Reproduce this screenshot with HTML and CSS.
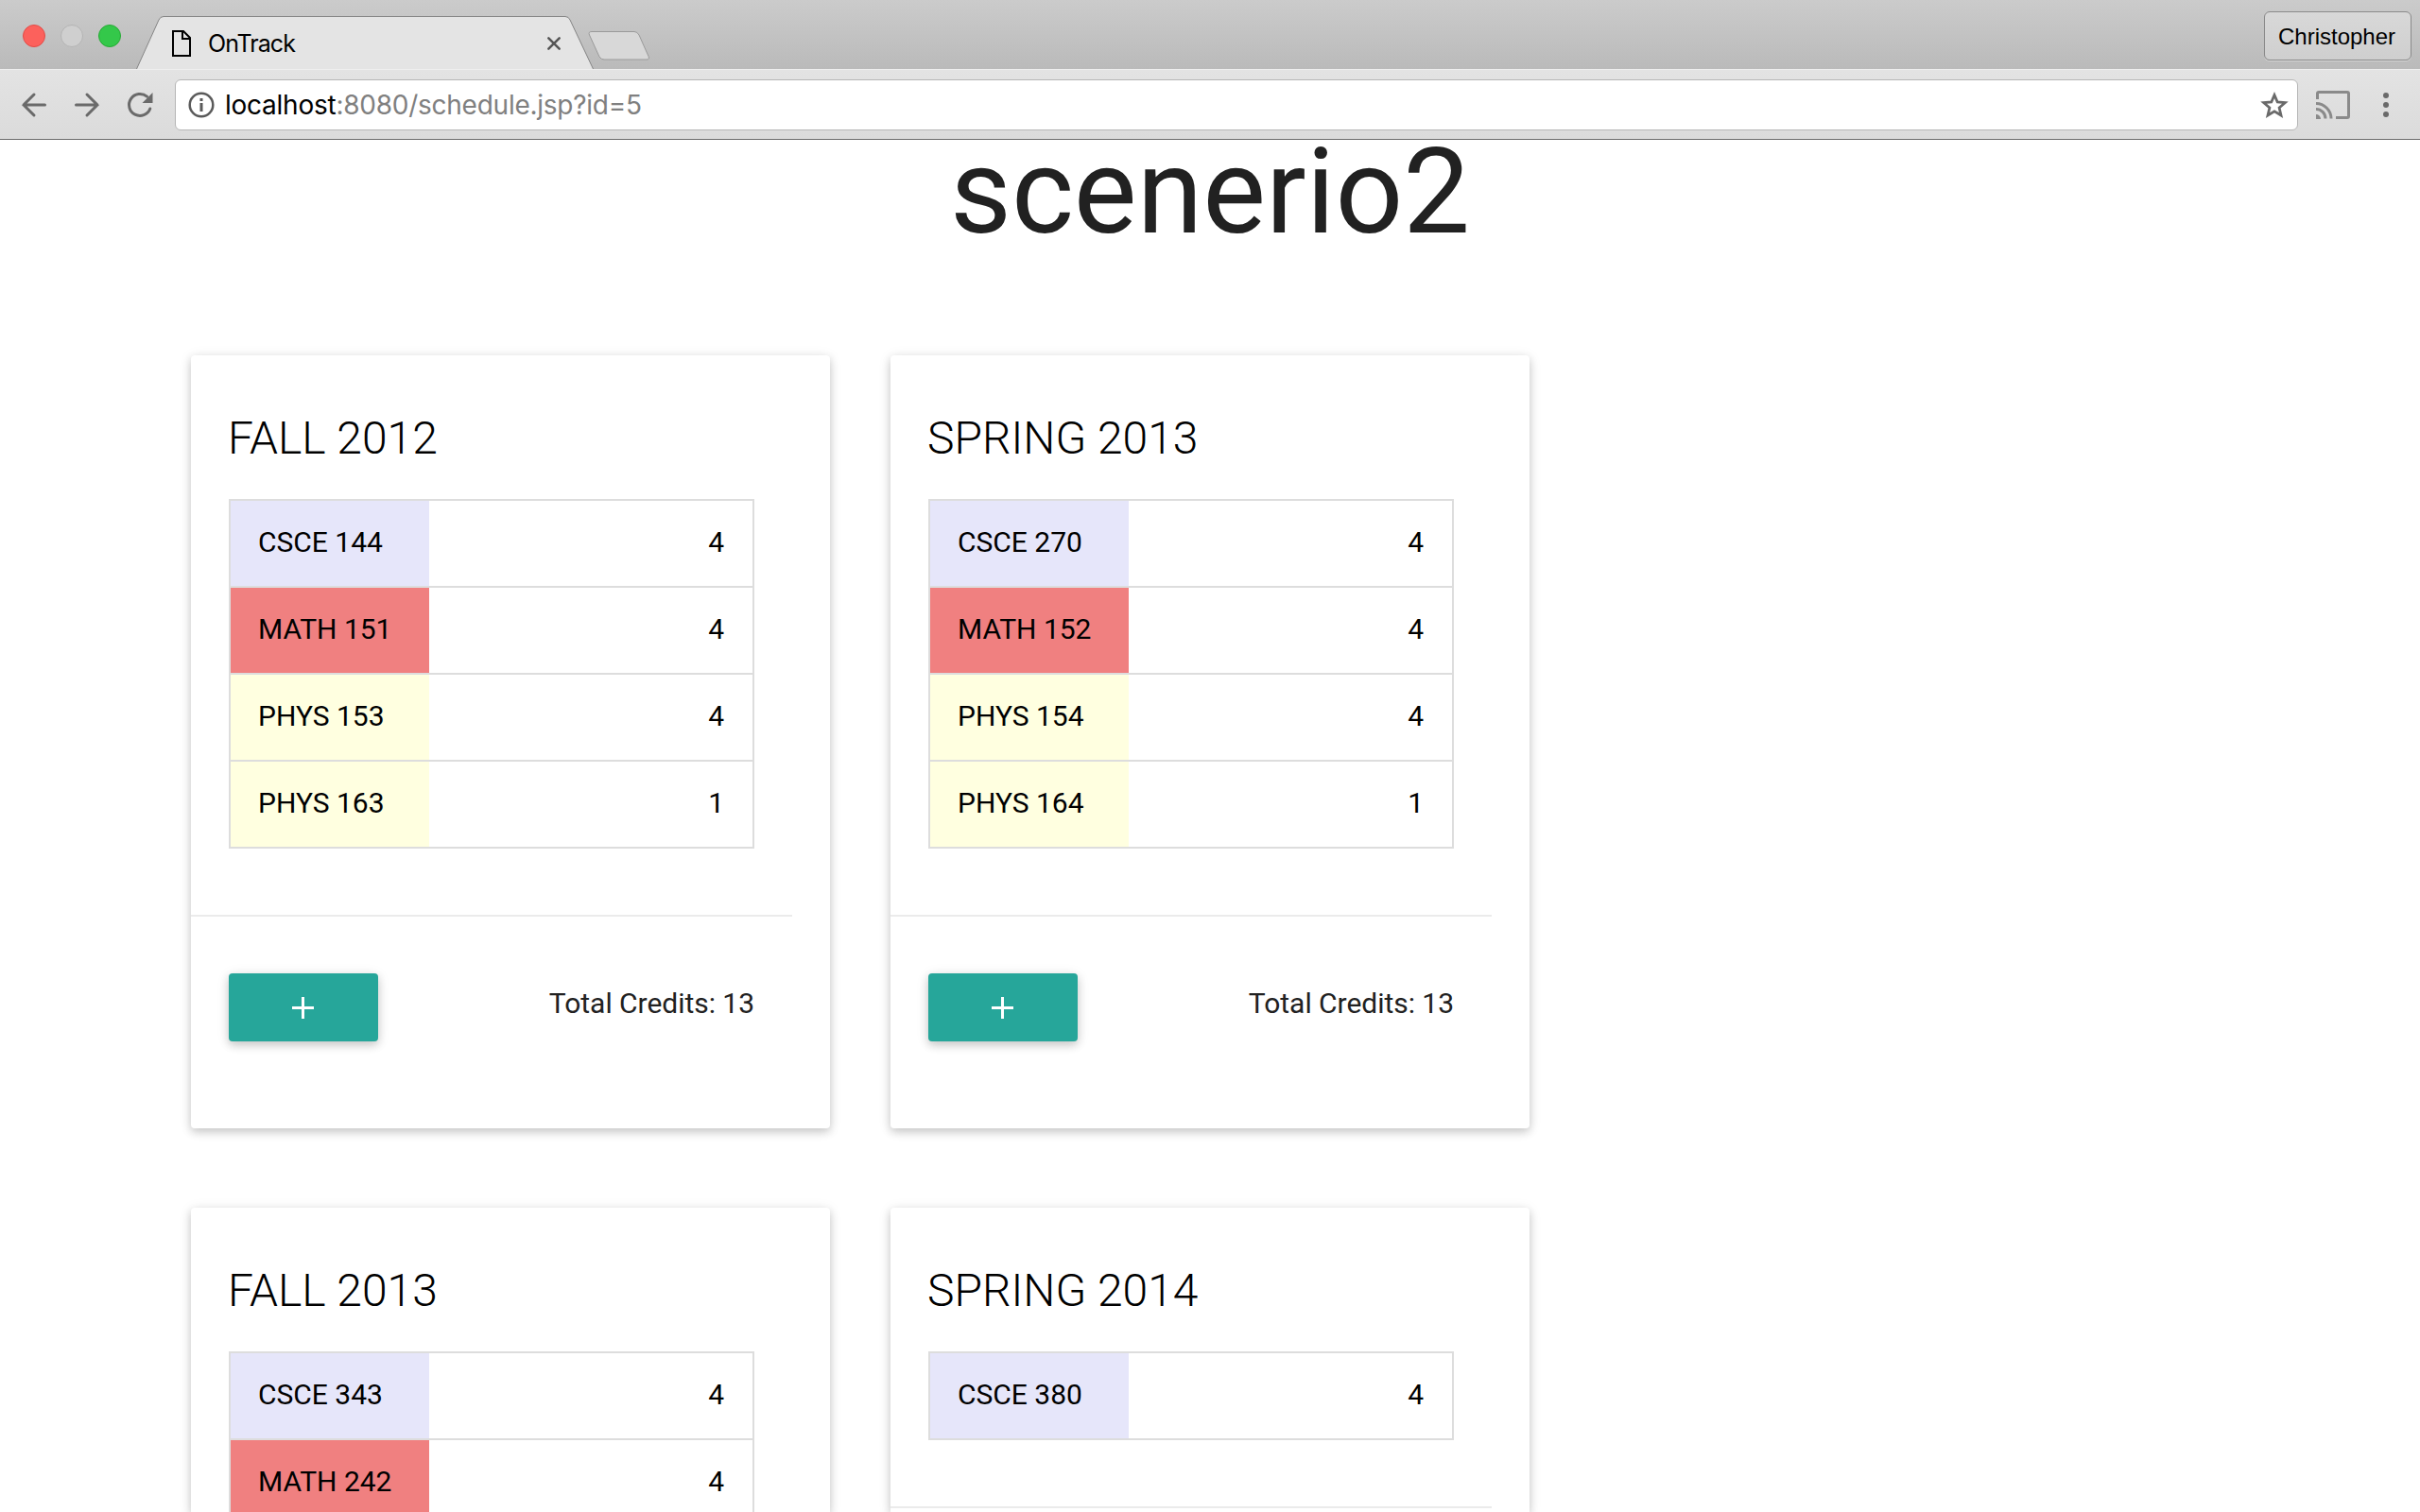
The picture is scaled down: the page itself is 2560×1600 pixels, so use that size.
FILE: index.html
```html
<!DOCTYPE html>
<html lang="en">
<head>
<meta charset="utf-8">
<title>OnTrack</title>
<link rel="stylesheet" href="styles.css">
</head>
<body>
<header class="browser">
  <div class="tabstrip">
    <div class="lights"><span class="light red"></span><span class="light idle"></span><span class="light green"></span></div>
    <div class="tab">
      <svg class="tab-shape" width="484" height="56" viewBox="0 0 484 56"><path d="M0.500 56L24 4Q25.500 0.500 29 0.500H454Q457.500 0.500 459 4L483.500 56" fill="#e4e4e4" stroke="#858585"/></svg>
      <div class="tab-content">
        <svg width="20" height="28" viewBox="0 0 20 28" fill="none" stroke="#000" stroke-width="2"><path d="M1 1H12L19 8V27H1Z"/><path d="M11 1V9H19"/></svg>
        <span class="tab-title">OnTrack</span>
        <svg class="close" width="14" height="14" viewBox="0 0 14 14" stroke="#555" stroke-width="2.500" stroke-linecap="round"><path d="M1.300 1.300L12.700 12.700M12.700 1.300L1.300 12.700"/></svg>
      </div>
    </div>
    <svg class="newtab" width="66" height="33" viewBox="0 0 66 33"><path d="M4 1.500H49Q52 1.500 54 5L64 27.500Q65.500 31 62 31H17Q14 31 12 28L1.500 5Q0 1.500 4 1.500Z" fill="#d8d8d8" stroke="#9a9a9a"/></svg>
    <div class="profile">Christopher</div>
  </div>
  <div class="toolbar">
    <div class="nav">
      <svg width="28" height="26" viewBox="0 0 28 26" fill="none" stroke="#6a6a6a" stroke-width="3" stroke-linecap="round"><path d="M25.500 13H3M14 2L3 13L14 24"/></svg>
      <svg width="28" height="26" viewBox="0 0 28 26" fill="none" stroke="#6a6a6a" stroke-width="3" stroke-linecap="round"><path d="M2.500 13H25M14 2L25 13L14 24"/></svg>
      <svg width="28" height="28" viewBox="0 0 28 28"><path d="M21.500 5.200A11.500 11.500 0 1 0 24.800 18" fill="none" stroke="#6a6a6a" stroke-width="3" stroke-linecap="round"/><path d="M27.500 1V12H16.500Z" fill="#6a6a6a"/></svg>
    </div>
    <div class="omnibox">
      <svg width="28" height="28" viewBox="0 0 28 28"><circle cx="14" cy="14" r="12.300" fill="none" stroke="#5a5a5a" stroke-width="2.500"/><path d="M12.500 7h3v3h-3zM12.500 12h3v9h-3z" fill="#5a5a5a"/></svg>
      <span class="url">localhost<span class="path">:8080/schedule.jsp?id=5</span></span>
      <svg class="star" width="30" height="28" viewBox="0 0 30 28"><path d="M15 3.500L18.200 11L26.300 11.700L20.100 17L22 25L15 20.800L8 25L9.900 17L3.700 11.700L11.800 11Z" fill="none" stroke="#6a6a6a" stroke-width="2.800"/></svg>
    </div>
    <svg class="cast" width="36" height="30" viewBox="0 0 36 30" fill="none" stroke="#8a8a8a" stroke-width="3"><path d="M1.500 9V3Q1.500 1.500 3 1.500H33Q34.500 1.500 34.500 3V27Q34.500 28.500 33 28.500H21"/><path d="M0 13.500A16 16 0 0 1 16 29.500M0 19.500A10 10 0 0 1 10 29.500"/><path d="M0 25A5 5 0 0 1 5 30H0Z" fill="#8a8a8a" stroke="none"/></svg>
    <svg class="dots" width="6" height="26" viewBox="0 0 6 26" fill="#6a6a6a"><circle cx="3" cy="3" r="3"/><circle cx="3" cy="13" r="3"/><circle cx="3" cy="23" r="3"/></svg>
  </div>
</header>
<main class="page">
  <h1 class="title">scenerio2</h1>
  <div class="grid">
    <section class="card">
      <h2 class="term">FALL 2012</h2>
      <ul class="courses">
        <li class="course"><span class="name csce">CSCE 144</span><span class="credits">4</span></li>
        <li class="course"><span class="name math">MATH 151</span><span class="credits">4</span></li>
        <li class="course"><span class="name phys">PHYS 153</span><span class="credits">4</span></li>
        <li class="course"><span class="name phys">PHYS 163</span><span class="credits">1</span></li>
      </ul>
      <div class="actions"><button class="add"><svg class="plus" width="23" height="23" viewBox="0 0 23 23" stroke="#fff" stroke-width="3"><path d="M11.500 0V23M0 11.500H23"/></svg></button><span class="total">Total Credits: 13</span></div>
    </section>
    <section class="card">
      <h2 class="term">SPRING 2013</h2>
      <ul class="courses">
        <li class="course"><span class="name csce">CSCE 270</span><span class="credits">4</span></li>
        <li class="course"><span class="name math">MATH 152</span><span class="credits">4</span></li>
        <li class="course"><span class="name phys">PHYS 154</span><span class="credits">4</span></li>
        <li class="course"><span class="name phys">PHYS 164</span><span class="credits">1</span></li>
      </ul>
      <div class="actions"><button class="add"><svg class="plus" width="23" height="23" viewBox="0 0 23 23" stroke="#fff" stroke-width="3"><path d="M11.500 0V23M0 11.500H23"/></svg></button><span class="total">Total Credits: 13</span></div>
    </section>
    <section class="card">
      <h2 class="term">FALL 2013</h2>
      <ul class="courses">
        <li class="course"><span class="name csce">CSCE 343</span><span class="credits">4</span></li>
        <li class="course"><span class="name math">MATH 242</span><span class="credits">4</span></li>
      </ul>
    </section>
    <section class="card">
      <h2 class="term">SPRING 2014</h2>
      <ul class="courses">
        <li class="course"><span class="name csce">CSCE 380</span><span class="credits">4</span></li>
      </ul>
      <div class="actions"></div>
    </section>
  </div>
</main>
</body>
</html>
```
FILE: styles.css
```css
* { box-sizing: border-box; }
body {
  display: flex;
  flex-direction: column;
  margin: 0;
  height: 1600px;
  overflow: hidden;
  background: #fff;
  color: #212121;
  font-family: Roboto, sans-serif;
  font-size: 30px;
}
svg { display: block; flex: none; overflow: visible; }

/* Browser window */
.browser { flex: none; height: 148px; border-bottom: 1px solid #6c6c6c; }
.tabstrip {
  display: flex;
  height: 73px;
  background: linear-gradient(#cbcbcb, #bababa);
}
.lights { display: flex; gap: 16px; padding: 26px 0 0 24px; width: 144px; }
.light { width: 24px; height: 24px; border-radius: 50%; border: 1px solid; }
.red { background: #fc615c; border-color: #e24b46; }
.idle { background: #cfcfcf; border-color: #b4b4b4; }
.green { background: #34c84a; border-color: #27aa35; }
.tab { display: grid; width: 484px; margin-top: 17px; height: 56px; }
.tab-shape, .tab-content { grid-area: 1 / 1; }
.tab-content {
  display: flex;
  align-items: center;
  padding: 2px 35px 0 38px;
}
.tab-title { margin-left: 18px; color: #000; font: 25px Inter, sans-serif; letter-spacing: -0.9px; }
.close { margin-left: auto; }
.newtab { margin: 32px 0 0 -6px; }
.profile {
  display: flex;
  align-items: center;
  justify-content: center;
  width: 156px;
  height: 52px;
  margin: 12px 9px 0 auto;
  padding: 2px 2px 0 0;
  border: 1px solid #8a8a8a;
  border-radius: 6px;
  background: linear-gradient(#d8d8d8, #cfcfcf);
  box-shadow: 0 1px 0 #d4d4d4;
  color: #000;
  font: 24px "Liberation Sans", Arial, sans-serif;
}
.toolbar {
  display: flex;
  align-items: center;
  height: 74px;
  padding: 0 33px 0 22px;
  border-top: 1px solid #eee;
  background: linear-gradient(#e3e3e3, #dbdbdb);
}
.nav { display: flex; align-items: center; gap: 28px; width: 163px; }
.omnibox {
  display: flex;
  align-items: center;
  flex: 1;
  height: 54px;
  padding: 0 9px 0 13px;
  border: 1px solid #b6b6b6;
  border-radius: 6px;
  background: #fff;
}
.url { margin-left: 11px; color: #000; font: 28px Inter, sans-serif; letter-spacing: -0.25px; }
.path { color: #808080; }
.star { margin-left: auto; }
.cast { margin-left: 19px; }
.dots { margin-left: 35px; }

/* Schedule */
.page { flex: 1; min-height: 0; }
.title {
  margin: 0;
  height: 228px;
  line-height: 110px;
  text-align: center;
  font-size: 126px;
  font-weight: 400;
}
.grid {
  display: grid;
  grid-template-columns: 676px 676px;
  grid-template-rows: 818px 322px;
  gap: 84px 64px;
  padding-left: 202px;
}
.card {
  padding-top: 40px;
  border-radius: 4px;
  background: #fff;
  box-shadow: 0 4px 10px 0 rgba(0,0,0,.16), 0 2px 14px 0 rgba(0,0,0,.1);
}
.card:nth-child(n+3) { border-radius: 4px 4px 0 0; }
.term { margin: 0 0 16px 39px; height: 96px; line-height: 96px; font-size: 48px; font-weight: 300; color: #000; }
.courses { width: 556px; margin: 0 0 70px 40px; padding: 0; list-style: none; border: 2px solid #ddd; color: #000; }
.course { display: flex; justify-content: space-between; height: 92px; line-height: 88px; border-bottom: 2px solid #ddd; }
.course:last-child { height: 90px; border-bottom: 0; }
.name { width: 210px; padding-left: 29px; }
.credits { padding-right: 30px; }
.csce { background: #e6e6fa; }
.math { background: #f08080; }
.phys { background: #ffffe0; }
.actions {
  display: flex;
  align-items: flex-start;
  justify-content: space-between;
  width: 636px;
  padding: 60px 40px 0;
  border-top: 2px solid #ebebeb;
}
.add {
  display: flex;
  align-items: center;
  justify-content: center;
  width: 158px;
  height: 72px;
  padding: 0;
  border: 0;
  border-radius: 4px;
  background: #26a69a;
  box-shadow: 0 4px 10px 0 rgba(0,0,0,.16), 0 2px 14px 0 rgba(0,0,0,.1);
}
.plus { margin: 1px 1px 0 0; }
.total { line-height: 64px; letter-spacing: -0.03px; }
```
